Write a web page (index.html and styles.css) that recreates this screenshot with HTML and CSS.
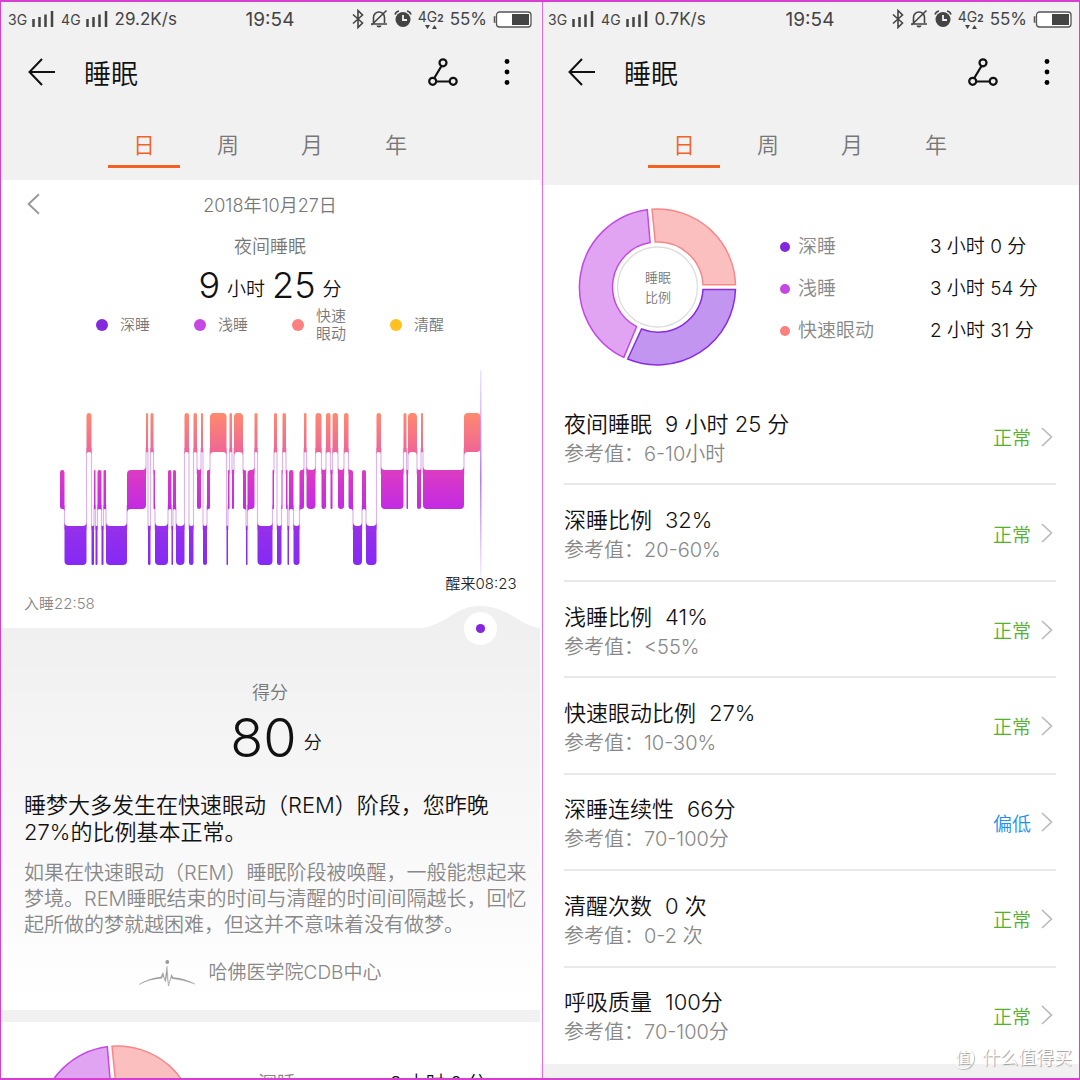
FILE: index.html
```html
<!DOCTYPE html>
<html lang="zh-CN">
<head>
  <meta charset="UTF-8">
  <meta name="viewport" content="width=device-width, initial-scale=1.0">
  <title>睡眠</title>
  <link rel="stylesheet" href="styles.css">
</head>
<body>
  <!-- Shared icons -->
  <svg class="sprite" aria-hidden="true">
    <symbol id="signal" viewBox="0 0 22 16">
      <path d="M1.5 8v8M7.5 6v10M13.5 3.500v12.500M20 0v16" stroke="#444" stroke-width="2.500" fill="none"/>
    </symbol>
    <symbol id="bluetooth" viewBox="0 0 12 20">
      <path d="M1 5.500l9.500 8.500-4.500 4.500v-17l4.500 4.500L1 14.500" fill="none" stroke="#444" stroke-width="1.600"/>
    </symbol>
    <symbol id="mute" viewBox="0 0 18 20">
      <path d="M3.500 14V8.500a5.500 5.500 0 0 1 11 0V14M1 15h16M16.500 1.500L1.500 16" fill="none" stroke="#444" stroke-width="1.600"/>
      <path d="M6.500 16.500h5a2.500 2 0 0 1-5 0z" fill="#444"/>
    </symbol>
    <symbol id="alarm" viewBox="0 0 18 20">
      <circle cx="9" cy="10.500" r="7.500" fill="#444"/>
      <path d="M9 6v5h4" fill="none" stroke="#f1f1f1" stroke-width="1.800"/>
      <path d="M1 5.500Q2 2.500 5 2M17 5.500Q16 2.500 13 2" fill="none" stroke="#444" stroke-width="1.600"/>
    </symbol>
    <symbol id="arrows" viewBox="0 0 12 4">
      <path d="M0 0h5L2.500 4zM7 4h5L9.500 0z" fill="#444"/>
    </symbol>
    <symbol id="battery" viewBox="0 0 39 17">
      <rect x="3.500" y="1" width="34.500" height="15" rx="3" fill="#fff" stroke="#555" stroke-width="1.300"/>
      <path d="M2.500 6H1.500v5h1" fill="none" stroke="#555" stroke-width="1.500"/>
      <rect x="19" y="3" width="17" height="11" fill="#444"/>
    </symbol>
    <symbol id="back" viewBox="0 0 28 28">
      <path d="M14 1L1.500 14 14 27M1.500 14H27" fill="none" stroke="#111" stroke-width="2"/>
    </symbol>
    <symbol id="route" viewBox="0 0 30 28">
      <path d="M13.500 8L6 20.500M8 23.500h14" stroke="#111" stroke-width="2.200"/>
      <circle cx="15" cy="4.800" r="3.500" fill="none" stroke="#111" stroke-width="2.200"/>
      <circle cx="4.700" cy="23.300" r="3.500" fill="none" stroke="#111" stroke-width="2.200"/>
      <circle cx="25.200" cy="23.300" r="3.500" fill="none" stroke="#111" stroke-width="2.200"/>
    </symbol>
    <symbol id="more" viewBox="0 0 6 28">
      <circle cx="3" cy="3.500" r="2.400"/>
      <circle cx="3" cy="14" r="2.400"/>
      <circle cx="3" cy="24.500" r="2.400"/>
    </symbol>
    <symbol id="next" viewBox="0 0 12 20">
      <path d="M1 1l9.500 9L1 19" fill="none" stroke="#bbb" stroke-width="1.700"/>
    </symbol>
    <symbol id="pulse" viewBox="0 0 56 26">
      <path d="M0 24.500Q10 18 22 17l2-4.500 2 8L28 6l1.500 20 3-11.500 1.500 3Q45 18 56 24Q44 19.500 33 18.500l-1-1L29.500 26 28 14l-1.500 8L24 15.500 22.800 18.200Q10 19 0 24.500z" fill="#999" stroke="#999" stroke-width=".4"/>
      <circle cx="28.300" cy="2" r="1.900" fill="#999"/>
    </symbol>
    <symbol id="donut" viewBox="0 0 160 160">
      <g stroke-width="1.500">
        <path d="M74 2.200A78 78 0 0 1 157.500 77.700H125A45 45 0 0 0 77.300 35.100z" fill="#fcbfbf" stroke="#fb8587"/>
        <path d="M157.500 82.500A78 78 0 0 1 49.700 152L63.500 122A45 45 0 0 0 125 82.500z" fill="#c195f0" stroke="#8a2be2"/>
        <path d="M45.800 150.400A78 78 0 0 1 69.300 2.700L72.100 35.500A45 45 0 0 0 58.600 119.700z" fill="#e1a4f2" stroke="#c548e5"/>
      </g>
      <circle cx="79.500" cy="80" r="40" fill="#fff" stroke="#ddd" stroke-width="1.300"/>
    </symbol>
  </svg>

  <main class="board">
    <!-- Day overview -->
    <section class="phone">
      <header class="top">
        <div class="status">
          <div class="status-left">
            <span class="net">3G</span><svg class="signal"><use href="#signal"/></svg>
            <span class="net">4G</span><svg class="signal"><use href="#signal"/></svg>
            <span class="speed">29.2K/s</span>
          </div>
          <span class="clock">19:54</span>
          <div class="status-right">
            <svg class="bluetooth"><use href="#bluetooth"/></svg>
            <svg class="bell"><use href="#mute"/></svg>
            <svg class="bell"><use href="#alarm"/></svg>
            <span class="sim"><span>4G<b>2</b></span><svg><use href="#arrows"/></svg></span>
            <span class="percent">55%</span>
            <svg class="battery"><use href="#battery"/></svg>
          </div>
        </div>
        <div class="title-bar">
          <button class="icon-button" aria-label="返回"><svg class="back"><use href="#back"/></svg></button>
          <h1>睡眠</h1>
          <button class="icon-button" aria-label="轨迹"><svg class="route"><use href="#route"/></svg></button>
          <button class="icon-button" aria-label="更多"><svg class="more"><use href="#more"/></svg></button>
        </div>
        <nav class="tabs">
          <button class="tab active">日</button>
          <button class="tab">周</button>
          <button class="tab">月</button>
          <button class="tab">年</button>
        </nav>
      </header>

      <div class="date-row">
        <button class="icon-button" aria-label="前一天">
          <svg class="prev" viewBox="0 0 12 20"><path d="M11 1L1.500 10 11 19" fill="none" stroke="#999" stroke-width="1.800"/></svg>
        </button>
        <span>2018年10月27日</span>
      </div>
      <p class="label">夜间睡眠</p>
      <p class="duration"><b>9</b><span>小时</span><b>25</b><span>分</span></p>

      <ul class="stages">
        <li><i class="dot deep"></i>深睡</li>
        <li><i class="dot light"></i>浅睡</li>
        <li><i class="dot rem"></i>快速<br>眼动</li>
        <li><i class="dot awake"></i>清醒</li>
      </ul>

      <svg class="chart" viewBox="0 344 540 284">
        <defs>
          <linearGradient id="stage" gradientUnits="userSpaceOnUse" x1="0" y1="413" x2="0" y2="565">
            <stop offset="0" stop-color="#ff8a6e"/>
            <stop offset=".26" stop-color="#ef6596"/>
            <stop offset=".38" stop-color="#dc3cc2"/>
            <stop offset=".62" stop-color="#c42be2"/>
            <stop offset=".75" stop-color="#9630ea"/>
            <stop offset="1" stop-color="#8529f5"/>
          </linearGradient>
          <linearGradient id="cursor" x1="0" y1="0" x2="0" y2="1">
            <stop offset="0" stop-color="#b07cf5" stop-opacity=".2"/>
            <stop offset=".5" stop-color="#b07cf5"/>
            <stop offset="1" stop-color="#b07cf5" stop-opacity="0"/>
          </linearGradient>
        </defs>
        <g id="stage-lines" stroke="#c884dc" stroke-opacity=".6" stroke-width="1.200"></g>
        <path id="stage-bars" fill="url(#stage)"/>
        <rect x="480" y="370" width="1.500" height="220" fill="url(#cursor)"/>
        <path d="M410 629C446 629 452 606 480 606S520 626 540 628V629z" fill="#f0f0f0"/>
        <circle cx="480.500" cy="628.500" r="16.500" fill="#fff"/>
        <circle cx="480.500" cy="628.500" r="4.600" fill="#8427de"/>
        <text x="481" y="589" class="wake">醒来08:23</text>
        <text x="24" y="609" class="asleep">入睡22:58</text>
      </svg>

      <div class="score">
        <p class="score-label">得分</p>
        <p class="score-value"><b>80</b><span>分</span></p>
        <h2>睡梦大多发生在快速眼动（REM）阶段，您昨晚27%的比例基本正常。</h2>
        <p class="advice">如果在快速眼动（REM）睡眠阶段被唤醒，一般能想起来梦境。REM睡眠结束的时间与清醒的时间间隔越长，回忆起所做的梦就越困难，但这并不意味着没有做梦。</p>
        <p class="source"><svg><use href="#pulse"/></svg>哈佛医学院CDB中心</p>
      </div>

      <div class="ratio">
        <div class="donut"><svg><use href="#donut"/></svg></div>
        <dl class="ratio-list">
          <dt><i class="dot deep"></i>深睡</dt><dd>3 小时 0 分</dd>
        </dl>
      </div>
    </section>

    <!-- Details -->
    <section class="phone details">
      <header class="top">
        <div class="status">
          <div class="status-left">
            <span class="net">3G</span><svg class="signal"><use href="#signal"/></svg>
            <span class="net">4G</span><svg class="signal"><use href="#signal"/></svg>
            <span class="speed">0.7K/s</span>
          </div>
          <span class="clock">19:54</span>
          <div class="status-right">
            <svg class="bluetooth"><use href="#bluetooth"/></svg>
            <svg class="bell"><use href="#mute"/></svg>
            <svg class="bell"><use href="#alarm"/></svg>
            <span class="sim"><span>4G<b>2</b></span><svg><use href="#arrows"/></svg></span>
            <span class="percent">55%</span>
            <svg class="battery"><use href="#battery"/></svg>
          </div>
        </div>
        <div class="title-bar">
          <button class="icon-button" aria-label="返回"><svg class="back"><use href="#back"/></svg></button>
          <h1>睡眠</h1>
          <button class="icon-button" aria-label="轨迹"><svg class="route"><use href="#route"/></svg></button>
          <button class="icon-button" aria-label="更多"><svg class="more"><use href="#more"/></svg></button>
        </div>
        <nav class="tabs">
          <button class="tab active">日</button>
          <button class="tab">周</button>
          <button class="tab">月</button>
          <button class="tab">年</button>
        </nav>
      </header>

      <div class="ratio">
        <div class="donut"><svg><use href="#donut"/></svg><p>睡眠<br>比例</p></div>
        <dl class="ratio-list">
          <dt><i class="dot deep"></i>深睡</dt><dd>3 小时 0 分</dd>
          <dt><i class="dot light"></i>浅睡</dt><dd>3 小时 54 分</dd>
          <dt><i class="dot rem"></i>快速眼动</dt><dd>2 小时 31 分</dd>
        </dl>
      </div>

      <div class="metrics">
        <a class="metric" href="#night">
          <div><h3>夜间睡眠<span>9 小时 25 分</span></h3><p>参考值：6-10小时</p></div>
          <span class="result">正常</span><svg class="next"><use href="#next"/></svg>
        </a>
        <a class="metric" href="#deep">
          <div><h3>深睡比例<span>32%</span></h3><p>参考值：20-60%</p></div>
          <span class="result">正常</span><svg class="next"><use href="#next"/></svg>
        </a>
        <a class="metric" href="#light">
          <div><h3>浅睡比例<span>41%</span></h3><p>参考值：&lt;55%</p></div>
          <span class="result">正常</span><svg class="next"><use href="#next"/></svg>
        </a>
        <a class="metric" href="#rem">
          <div><h3>快速眼动比例<span>27%</span></h3><p>参考值：10-30%</p></div>
          <span class="result">正常</span><svg class="next"><use href="#next"/></svg>
        </a>
        <a class="metric" href="#continuity">
          <div><h3>深睡连续性<span>66分</span></h3><p>参考值：70-100分</p></div>
          <span class="result low">偏低</span><svg class="next"><use href="#next"/></svg>
        </a>
        <a class="metric" href="#awake">
          <div><h3>清醒次数<span>0 次</span></h3><p>参考值：0-2 次</p></div>
          <span class="result">正常</span><svg class="next"><use href="#next"/></svg>
        </a>
        <a class="metric" href="#breath">
          <div><h3>呼吸质量<span>100分</span></h3><p>参考值：70-100分</p></div>
          <span class="result">正常</span><svg class="next"><use href="#next"/></svg>
        </a>
      </div>
    </section>

    <div class="watermark"><span class="badge">值</span>什么值得买</div>
  </main>

  <script src="script.js"></script>
</body>
</html>
```
FILE: styles.css
```css
* {
  box-sizing: border-box;
}

body {
  margin: 0;
  font-family: Inter, "Noto Sans CJK SC", sans-serif;
  font-weight: 350;
  color: #111;
  background-color: #fff;
}

h1, h2, h3, p, ul, dl, dd {
  margin: 0;
  padding: 0;
  font-weight: inherit;
}

button {
  border: none;
  padding: 0;
  background: none;
  font: inherit;
  color: inherit;
  cursor: pointer;
}

svg {
  display: block;
  flex: none;
}

.sprite {
  position: absolute;
  width: 0;
  height: 0;
}

/* Two screens side by side */
.board {
  position: relative;
  display: grid;
  grid-template-columns: 1fr 1fr;
  height: 100vh;
  padding: 2px 0;
  overflow: hidden;
}

.board::after {
  content: "";
  position: absolute;
  inset: 0;
  border: solid #d63fd0;
  border-width: 2px 1px;
  pointer-events: none;
}

.phone {
  position: relative;
  min-width: 0;
  min-height: 0;
}

.details {
  display: flex;
  flex-direction: column;
  border-bottom: 14px solid #f1f1f1;
}

.details::before {
  content: "";
  position: absolute;
  top: 0;
  bottom: -14px;
  left: 2px;
  width: 1px;
  background-color: #e26ae2;
}

/* Header */
.top {
  padding-bottom: 12px;
  background-color: #f1f1f1;
}

.details .top {
  padding-bottom: 17px;
}

.status {
  display: grid;
  grid-template-columns: 1fr auto 1fr;
  align-items: center;
  height: 34px;
  padding: 0 8px;
  color: #444;
  font-weight: 400;
}

.status-left, .status-right {
  display: flex;
  align-items: center;
}

.status-right {
  justify-content: flex-end;
  gap: 6px;
}

.net {
  font-size: 14px;
}

.signal {
  width: 22px;
  height: 16px;
  margin: 0 7px 0 5px;
}

.speed, .percent {
  font-size: 17px;
}

.clock {
  font-size: 19px;
}

.bluetooth {
  width: 12px;
  height: 20px;
}

.bell {
  width: 18px;
  height: 20px;
}

.sim {
  display: grid;
  justify-items: center;
  font-size: 14px;
  line-height: 14px;
}

.sim b {
  font-size: 10px;
}

.sim svg {
  width: 12px;
  height: 4px;
}

.battery {
  width: 39px;
  height: 17px;
}

.title-bar {
  display: flex;
  align-items: center;
  height: 74px;
  padding: 0 30px 2px 28px;
}

.title-bar h1 {
  flex: 1;
  margin-left: 28px;
  font-size: 27px;
}

.back {
  width: 28px;
  height: 28px;
}

.route {
  width: 30px;
  height: 28px;
  margin-right: 46px;
}

.more {
  width: 6px;
  height: 28px;
}

.tabs {
  display: flex;
  gap: 12px;
  padding-left: 20%;
}

.tab {
  width: 72px;
  padding-top: 15px;
  border-bottom: 3px solid transparent;
  font-size: 22px;
  line-height: 40px;
  color: #777;
}

.tab.active {
  border-color: #f26322;
  color: #f26322;
}

/* Night summary */
.date-row {
  display: grid;
  grid-template-columns: 1fr auto 1fr;
  align-items: center;
  height: 50px;
  padding: 0 27px 2px;
  font-size: 18px;
  color: #777;
}

.prev {
  width: 13px;
  height: 22px;
}

.label, .score-label {
  font-size: 18px;
  line-height: 34px;
  text-align: center;
  color: #777;
}

.duration, .score-value {
  display: flex;
  justify-content: center;
  align-items: center;
  gap: 7px;
}

.duration {
  height: 42px;
  font-size: 19px;
}

.duration span {
  padding-top: 4px;
}

.duration b {
  font-size: 36px;
  font-weight: 300;
}

.stages {
  display: flex;
  justify-content: space-between;
  height: 38px;
  padding: 0 96px;
  list-style: none;
}

.stages li {
  display: flex;
  align-items: center;
  gap: 12px;
  font-size: 15px;
  line-height: 18px;
  color: #777;
}

.dot {
  width: 12px;
  height: 12px;
  border-radius: 50%;
}

.deep { background-color: #8427de; }
.light { background-color: #c548e5; }
.rem { background-color: #fb8080; }
.awake { background-color: #ffc020; }

/* Sleep stage chart */
.chart {
  position: relative;
  width: 100%;
  overflow: visible;
}

.wake, .asleep {
  font-size: 15px;
}

.wake {
  text-anchor: middle;
  fill: #222;
}

.asleep {
  fill: #888;
}

/* Score */
.score {
  padding: 52px 24px 18px;
  border-bottom: 12px solid #f1f1f1;
  background: linear-gradient(#f0f0f0, #fff) padding-box;
}

.score-label {
  line-height: 26px;
}

.score-value {
  height: 62px;
  margin-left: 12px;
  font-size: 18px;
}

.score-value b {
  font-size: 54px;
  font-weight: 300;
}

.score-value span {
  padding-top: 8px;
}

.score h2 {
  margin-top: 24px;
  font-size: 22px;
  line-height: 27px;
}

.advice {
  margin: 14px -16px 0 0;
  font-size: 20px;
  line-height: 26px;
  color: #888;
}

.source {
  display: flex;
  justify-content: center;
  align-items: center;
  gap: 14px;
  margin: 16px 20px 0 0;
  font-size: 19px;
  line-height: 38px;
  color: #888;
}

.source svg {
  width: 56px;
  height: 26px;
}

/* Stage ratio */
.ratio {
  display: flex;
  align-items: flex-start;
  gap: 42px;
  padding: 22px 24px 22px 38px;
}

.donut {
  display: grid;
  place-items: center;
}

.donut > * {
  grid-area: 1 / 1;
}

.donut svg {
  width: 160px;
  height: 160px;
}

.donut p {
  position: relative;
  font-size: 13px;
  line-height: 20px;
  color: #777;
}

.ratio-list {
  flex: 1;
  display: grid;
  grid-template-columns: 150px 1fr;
  padding-top: 19px;
  font-size: 19px;
  line-height: 42px;
}

.ratio-list dt {
  display: flex;
  align-items: center;
  gap: 8px;
  color: #888;
}

.ratio-list .dot {
  width: 10px;
  height: 10px;
}

/* Metric rows share the remaining height */
.metrics {
  flex: 1;
  display: flex;
  flex-direction: column;
  padding: 0 24px;
}

.metric {
  flex: 1;
  display: flex;
  align-items: center;
  padding: 1px 3px 0 0;
  border-bottom: 2px solid #e9e9e9;
  color: inherit;
  text-decoration: none;
}

.metric:last-child {
  border-color: transparent;
}

.metric div {
  flex: 1;
  padding-top: 3px;
}

.metric h3 {
  font-size: 22px;
  line-height: 32px;
}

.metric h3 span {
  margin-left: 13px;
}

.metric p {
  font-size: 20px;
  line-height: 29px;
  color: #888;
}

.result {
  font-size: 19px;
  color: #55b02e;
}

.result.low {
  color: #2490ea;
}

.next {
  width: 12px;
  height: 20px;
  margin-left: 10px;
}

/* Watermark over the corner */
.watermark {
  position: absolute;
  right: 8px;
  bottom: 10px;
  display: flex;
  align-items: center;
  gap: 8px;
  font-size: 18px;
  line-height: 24px;
  color: #fff;
  text-shadow: 1px 1px 1px #999;
}

.badge {
  width: 22px;
  height: 22px;
  border: 1px solid #fff;
  border-radius: 50%;
  box-shadow: 1px 1px 1px #bbb;
  font-size: 15px;
  line-height: 20px;
  text-align: center;
}
```
FILE: script.js
```js
// Vertical band of each stage in the chart
const TOP = { rem: 413, light: 470, deep: 526 };
const BAR_HEIGHT = 39;

// Each stage runs from its x to the x of the next one
const stages = [
  [60, "light"], [64.5, "deep"], [86.5, "rem"], [91.5, "deep"], [94, "light"], [95.5, "deep"],
  [97.5, "light"], [101.5, "deep"], [103.5, "light"], [106, "deep"], [127, "light"], [146, "rem"],
  [148, "deep"], [150.5, "rem"], [153.5, "light"], [155, "deep"], [168, "light"], [171.5, "deep"],
  [173, "light"], [176, "deep"], [184.5, "rem"], [189, "deep"], [193.5, "rem"], [197, "light"],
  [201, "rem"], [203, "deep"], [207, "light"], [210, "rem"], [226.5, "deep"], [228, "light"],
  [229.5, "rem"], [232, "light"], [234, "rem"], [243, "light"], [246, "deep"], [247.5, "light"],
  [254.5, "rem"], [257.5, "deep"], [272.5, "light"], [274, "rem"], [277, "deep"], [281.5, "light"],
  [282.5, "rem"], [286, "light"], [287.5, "deep"], [289, "light"], [293.5, "deep"], [299.5, "light"],
  [304, "rem"], [306.5, "light"], [315.5, "rem"], [321.5, "light"], [326, "rem"], [330.5, "light"],
  [332.5, "rem"], [338, "light"], [344, "rem"], [348.5, "light"], [353, "deep"], [362, "light"],
  [366, "deep"], [376.5, "rem"], [381, "light"], [403.5, "rem"], [406.5, "light"], [408, "rem"],
  [417, "light"], [421, "rem"], [423, "light"], [464, "rem"]
];
const END = 480.5;

// A corner flares towards the neighbour it connects to, other corners are rounded
function barPath(x1, x2, top, prevTop, nextTop) {
  const bottom = top + BAR_HEIGHT;
  const r = Math.min(4, (x2 - x1) / 2);
  const startUp = prevTop < top ? -r : r;
  const endUp = nextTop < top ? -r : r;
  const startDown = prevTop > top ? r : -r;
  const endDown = nextTop > top ? r : -r;
  return `M${x1} ${top + startUp}Q${x1} ${top} ${x1 + r} ${top}H${x2 - r}Q${x2} ${top} ${x2} ${top + endUp}` +
    `V${bottom + endDown}Q${x2} ${bottom} ${x2 - r} ${bottom}H${x1 + r}Q${x1} ${bottom} ${x1} ${bottom + startDown}z`;
}

let bars = "";
let lines = "";
stages.forEach(([x, name], i) => {
  const top = TOP[name];
  const prev = stages[i - 1];
  const next = stages[i + 1];
  const prevTop = prev ? TOP[prev[1]] : top;
  const nextTop = next ? TOP[next[1]] : top;
  bars += barPath(x, next ? next[0] : END, top, prevTop, nextTop);
  if (prev) {
    const y1 = Math.min(top, prevTop) + BAR_HEIGHT - 4;
    const y2 = Math.max(top, prevTop) + 4;
    lines += `<path d="M${x} ${y1}V${y2}"/>`;
  }
});

document.getElementById("stage-bars").setAttribute("d", bars);
document.getElementById("stage-lines").innerHTML = lines;
```
